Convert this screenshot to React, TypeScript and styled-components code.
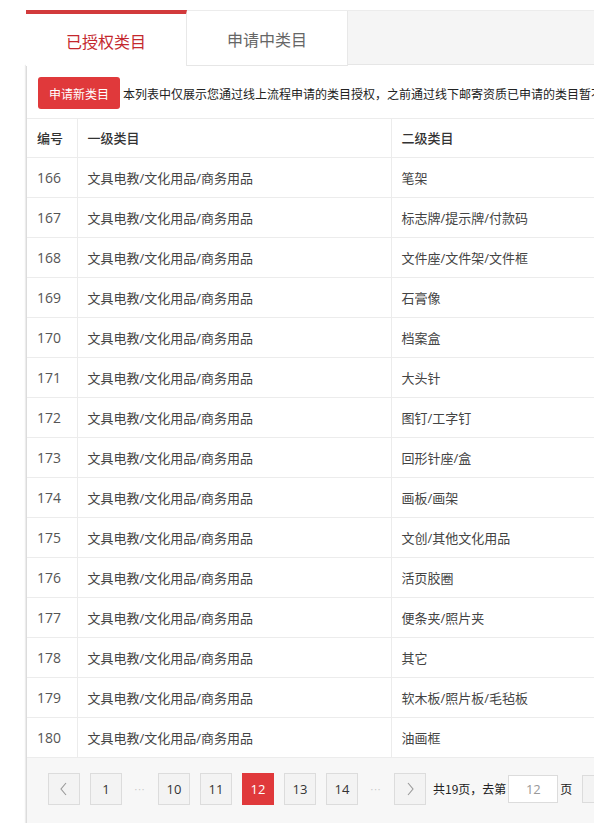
import React from "react";
import styled, { createGlobalStyle } from "styled-components";

const Global = createGlobalStyle`
  html, body { margin: 0; padding: 0; overflow: hidden; background: #fff; }
  body { font-family: "Open Sans", "Noto Sans CJK SC", sans-serif; color: #333; }
  * { box-sizing: border-box; }
`;

const Page = styled.div`
  padding: 10px 0 0 26px;
  width: 820px;
`;

const TabBar = styled.div`
  display: flex;
  height: 55px;
  background: #f5f5f5;
  border-top: 1px solid #ececec;
`;

const Tab = styled.div<{ $active?: boolean }>`
  width: 161px;
  height: ${(p) => (p.$active ? "56px" : "55px")};
  margin-top: ${(p) => (p.$active ? "-1px" : "0")};
  display: flex;
  align-items: center;
  justify-content: center;
  padding-top: 2px;
  font-family: "Noto Sans CJK SC", sans-serif;
  font-size: 16px;
  background: #fff;
  color: ${(p) => (p.$active ? "#c4282d" : "#666")};
  border-top: ${(p) => (p.$active ? "4px solid #d23a3c" : "none")};
  border-right: 1px solid #e8e8e8;
  border-bottom: ${(p) => (p.$active ? "none" : "1px solid #e6e6e6")};
`;

const TabRest = styled.div`
  flex: 1;
  border-bottom: 1px solid #e6e6e6;
`;

const Panel = styled.div`
  background: #fff;
  border-left: 1px solid #dcdcdc;
  box-shadow: -1px 0 1px #ececec;
`;

const Toolbar = styled.div`
  display: flex;
  align-items: center;
  padding: 12px 11px 9px;
  border-bottom: 1px solid #ececec;
  white-space: nowrap;
`;

const RedButton = styled.button`
  height: 32px;
  width: 82px;
  border: none;
  border-radius: 3px;
  background: #e0393b;
  color: #fff;
  font-family: "Noto Sans CJK SC", sans-serif;
  font-size: 12px;
  padding: 0;
  flex: none;
`;

const Notice = styled.span`
  margin-left: 3px;
  font-family: "Noto Sans CJK SC", sans-serif;
  font-size: 12px;
  color: #222;
`;

const Table = styled.table`
  width: 100%;
  border-collapse: collapse;
  table-layout: fixed;
`;

const Th = styled.th<{ $w?: number }>`
  width: ${(p) => (p.$w ? `${p.$w}px` : "auto")};
  height: 38px;
  padding: 0 10px;
  text-align: left;
  font-family: "Noto Sans CJK SC", sans-serif;
  font-size: 13px;
  font-weight: 500;
  color: #333;
  border-bottom: 1px solid #ececec;
  border-right: 1px solid #ececec;
`;

const Td = styled.td<{ $num?: boolean }>`
  height: 40px;
  padding: 0 10px;
  font-family: ${(p) => (p.$num ? `"Open Sans", sans-serif` : `"Open Sans", "Noto Sans CJK SC", sans-serif`)};
  font-size: ${(p) => (p.$num ? "14px" : "13px")};
  color: ${(p) => (p.$num ? "#555" : "#444")};
  border-bottom: 1px solid #ececec;
  border-right: 1px solid #ececec;
  white-space: nowrap;
`;

const Pager = styled.div`
  background: #f7f7f7;
  padding: 15px 0 30px 21px;
  display: flex;
  align-items: center;
  gap: 10px;
  white-space: nowrap;
`;

const PageBtn = styled.div<{ $active?: boolean }>`
  width: 32px;
  height: 32px;
  flex: none;
  display: flex;
  align-items: center;
  justify-content: center;
  border: 1px solid ${(p) => (p.$active ? "#e0393b" : "#dcdcdc")};
  background: ${(p) => (p.$active ? "#e0393b" : "#f3f3f3")};
  color: ${(p) => (p.$active ? "#fff" : "#333")};
  font-family: "Open Sans", sans-serif;
  font-size: 13px;
`;

const Dots = styled.span`
  width: 16px;
  flex: none;
  text-align: center;
  color: #c8c8c8;
  font-size: 10px;
  letter-spacing: 1px;
`;

const PagerText = styled.span`
  font-family: "Noto Sans CJK SC", sans-serif;
  font-size: 12px;
  color: #222;
  display: flex;
  align-items: center;
  margin-left: -3px;
`;

const JumpInput = styled.div`
  width: 50px;
  height: 28px;
  margin: 0 2px;
  border: 1px solid #dcdcdc;
  background: #fff;
  color: #999;
  font-family: "Open Sans", sans-serif;
  font-size: 13px;
  display: flex;
  align-items: center;
  justify-content: center;
`;

const GoBtn = styled.div`
  width: 52px;
  height: 28px;
  flex: none;
  border: 1px solid #dcdcdc;
  background: #f3f3f3;
  font-family: "Noto Sans CJK SC", sans-serif;
  font-size: 12px;
  display: flex;
  align-items: center;
  justify-content: center;
  color: #333;
`;

const Chevron = ({ dir }: { dir: "l" | "r" }) => (
  <svg width="10" height="14" viewBox="0 0 10 14">
    <polyline
      points={dir === "l" ? "7,1 2,7 7,13" : "3,1 8,7 3,13"}
      fill="none"
      stroke="#999"
      strokeWidth="1.1"
    />
  </svg>
);

const rows: [number, string][] = [
  [166, "笔架"],
  [167, "标志牌/提示牌/付款码"],
  [168, "文件座/文件架/文件框"],
  [169, "石膏像"],
  [170, "档案盒"],
  [171, "大头针"],
  [172, "图钉/工字钉"],
  [173, "回形针座/盒"],
  [174, "画板/画架"],
  [175, "文创/其他文化用品"],
  [176, "活页胶圈"],
  [177, "便条夹/照片夹"],
  [178, "其它"],
  [179, "软木板/照片板/毛毡板"],
  [180, "油画框"],
];

export default function App() {
  return (
    <Page>
      <Global />
      <TabBar>
        <Tab $active>已授权类目</Tab>
        <Tab>申请中类目</Tab>
        <TabRest />
      </TabBar>
      <Panel>
        <Toolbar>
          <RedButton>申请新类目</RedButton>
          <Notice>
            本列表中仅展示您通过线上流程申请的类目授权，之前通过线下邮寄资质已申请的类目暂不在此展示
          </Notice>
        </Toolbar>
        <Table>
          <thead>
            <tr>
              <Th $w={50}>编号</Th>
              <Th $w={314}>一级类目</Th>
              <Th>二级类目</Th>
            </tr>
          </thead>
          <tbody>
            {rows.map(([n, c]) => (
              <tr key={n}>
                <Td $num>{n}</Td>
                <Td>文具电教/文化用品/商务用品</Td>
                <Td>{c}</Td>
              </tr>
            ))}
          </tbody>
        </Table>
        <Pager>
          <PageBtn>
            <Chevron dir="l" />
          </PageBtn>
          <PageBtn>1</PageBtn>
          <Dots>···</Dots>
          <PageBtn>10</PageBtn>
          <PageBtn>11</PageBtn>
          <PageBtn $active>12</PageBtn>
          <PageBtn>13</PageBtn>
          <PageBtn>14</PageBtn>
          <Dots>···</Dots>
          <PageBtn>
            <Chevron dir="r" />
          </PageBtn>
          <PagerText>
            共19页，去第<JumpInput>12</JumpInput>页
          </PagerText>
          <GoBtn>确定</GoBtn>
        </Pager>
      </Panel>
    </Page>
  );
}
